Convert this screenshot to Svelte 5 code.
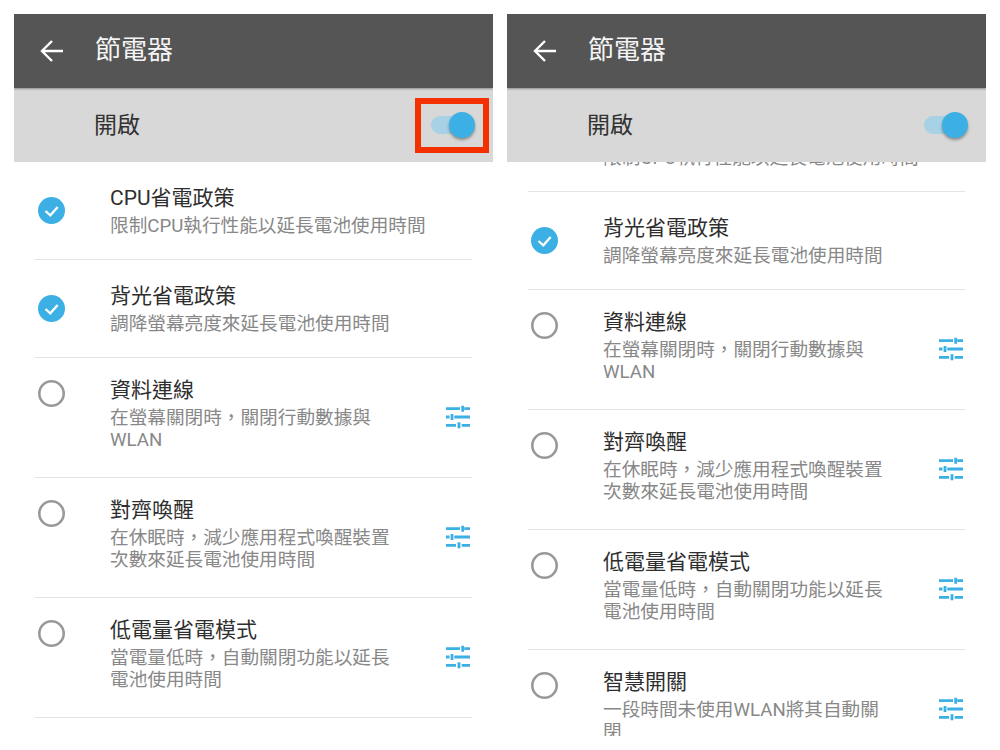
<script>
	const rows = [
		{ title: 'CPU省電政策', desc: '限制CPU執行性能以延長電池使用時間', on: true },
		{ title: '背光省電政策', desc: '調降螢幕亮度來延長電池使用時間', on: true },
		{ title: '資料連線', desc: '在螢幕關閉時，關閉行動數據與WLAN', on: false },
		{ title: '對齊喚醒', desc: '在休眠時，減少應用程式喚醒裝置次數來延長電池使用時間', on: false },
		{ title: '低電量省電模式', desc: '當電量低時，自動關閉功能以延長電池使用時間', on: false },
		{ title: '智慧開關', desc: '一段時間未使用WLAN將其自動關閉', on: false }
	]
</script>

{#snippet phone(scrolled, marked)}
	<section class="phone">
		<header class="appbar">
			<svg class="back" viewBox="0 0 24 24" aria-hidden="true">
				<path d="M23 12H2.500M12 2 2 12l10 10" />
			</svg>
			<h1>節電器</h1>
		</header>
		<div class="master">
			<span>開啟</span>
			<div class="switch"><i class="track"></i><i class="thumb"></i></div>
			{#if marked}<div class="marker"></div>{/if}
		</div>
		<div class="viewport">
			<ul class:scrolled>
				{#each rows as row}
					<li class:single={row.on}>
						{#if row.on}
							<svg class="state" viewBox="0 0 27 27" aria-hidden="true">
								<circle cx="13.5" cy="13.5" r="13.5" fill="#3cb0e4" />
								<path d="M7.500 14l4.800 4.300 7.400-8.300" fill="none" stroke="#fff" stroke-width="2.300" />
							</svg>
						{:else}
							<svg class="state" viewBox="0 0 27 27" aria-hidden="true">
								<circle cx="13.5" cy="13.5" r="12.2" fill="none" stroke="#999" stroke-width="2.6" />
							</svg>
						{/if}
						<div class="text">
							<div class="title">{row.title}</div>
							<div class="desc">{row.desc}</div>
						</div>
						{#if !row.on}
							<svg class="tune" viewBox="0 0 24 24" aria-hidden="true">
								<path d="M0 3.700h14M18.300 3.700H24M16.700 0.700v6M0 12h3.500M8.300 12H24M6 9v6M0 20.300h10M15.700 20.300H24M13 17.300v6" />
							</svg>
						{/if}
					</li>
				{/each}
			</ul>
		</div>
	</section>
{/snippet}

<main>
	{@render phone(false, true)}
	{@render phone(true, false)}
</main>

<style>
	:global(body) {
		background: #fff;
	}
	main {
		display: flex;
		gap: 14px;
		padding: 14px;
		font-family: Roboto, 'Noto Sans CJK TC', sans-serif;
	}
	.phone {
		width: 479px;
		height: 722px;
		display: flex;
		flex-direction: column;
		overflow: hidden;
	}
	.appbar {
		flex: none;
		height: 74px;
		background: #555;
		display: flex;
		align-items: center;
		padding-left: 26px;
		box-shadow: 0 1px 2px rgba(0, 0, 0, 0.35);
		position: relative;
		z-index: 1;
	}
	.back {
		width: 24px;
		height: 24px;
		fill: none;
		stroke: #fff;
		stroke-width: 2.4;
	}
	h1 {
		margin: 0 0 2px 31px;
		font-size: 26px;
		line-height: 34px;
		font-weight: 400;
		color: #f4f4f4;
	}
	.master {
		flex: none;
		height: 74px;
		background: #d8d8d8;
		display: flex;
		align-items: center;
		justify-content: space-between;
		padding: 0 18px 0 80px;
		font-size: 23px;
		line-height: 30px;
		color: #333;
		position: relative;
	}
	.master span {
		margin-top: 2px;
	}
	.switch {
		width: 44px;
		height: 26px;
		position: relative;
	}
	.track {
		position: absolute;
		left: 0;
		right: 4px;
		top: 4px;
		height: 18px;
		border-radius: 9px;
		background: #a7d1e4;
	}
	.thumb {
		position: absolute;
		right: 0;
		top: 0;
		width: 26px;
		height: 26px;
		border-radius: 50%;
		background: #3cb0e4;
		box-shadow: 0 2px 3px rgba(0, 0, 0, 0.35);
	}
	.marker {
		position: absolute;
		left: 401px;
		top: 10px;
		width: 74px;
		height: 55px;
		box-sizing: border-box;
		border: 6px solid #f53000;
	}
	.viewport {
		flex: 1;
		min-height: 0;
		overflow: hidden;
	}
	ul {
		list-style: none;
		margin: 0;
		padding: 0 21px;
	}
	ul.scrolled {
		margin-top: -68px;
	}
	li {
		display: flex;
		padding: 18px 0 26px;
		border-bottom: 1px solid #e4e4e4;
	}
	li.single {
		padding: 22px 0;
		align-items: center;
	}
	.state {
		flex: none;
		width: 27px;
		height: 27px;
		margin: 4px 45px 0 3px;
	}
	.single .state {
		margin-top: 0;
	}
	.text {
		width: 285px;
		flex: none;
	}
	.single .text {
		width: auto;
		flex: 1;
	}
	.title {
		font-size: 21px;
		line-height: 28px;
		color: #2e2e2e;
	}
	.desc {
		margin-top: 3px;
		font-size: 18.65px;
		line-height: 22px;
		color: #888;
	}
	.tune {
		flex: none;
		width: 24px;
		height: 24px;
		margin: 6px 2px 0 auto;
		align-self: center;
		fill: none;
		stroke: #3cb0e4;
		stroke-width: 2.8;
	}
</style>
